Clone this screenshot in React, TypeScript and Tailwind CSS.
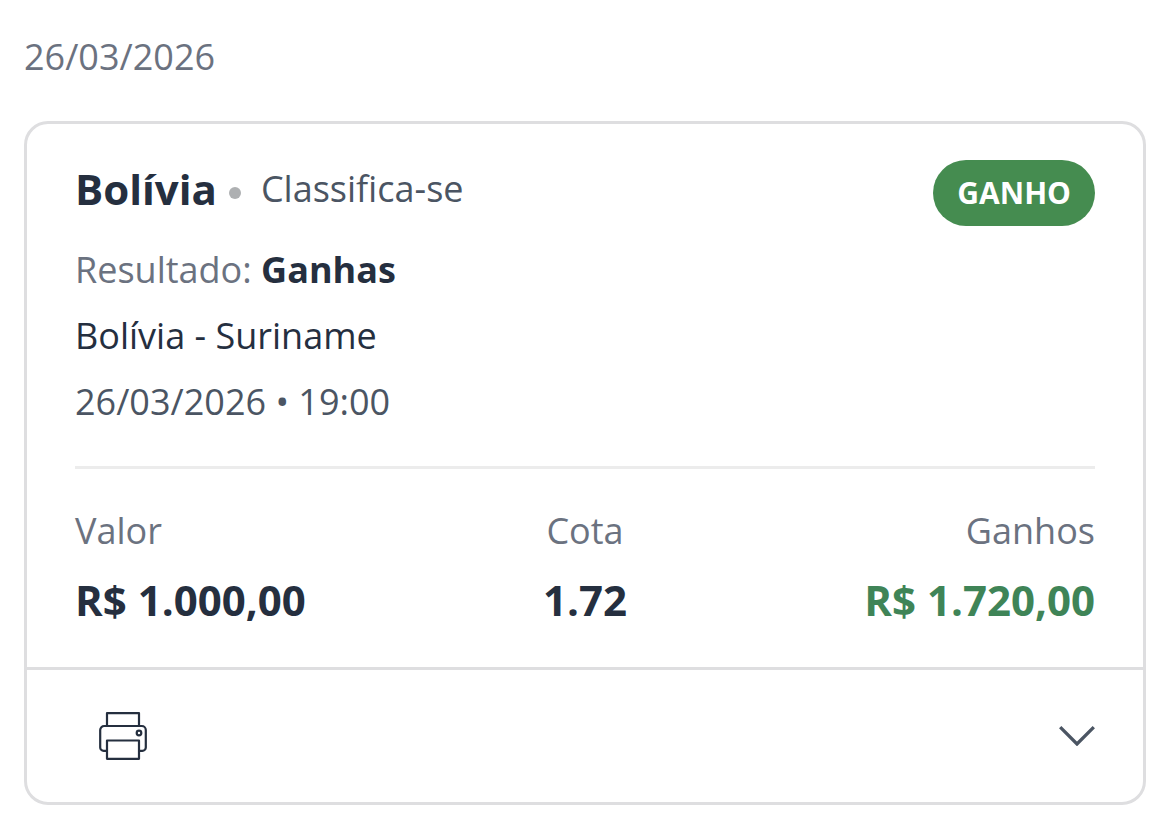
const STATS = [
  { label: "Valor", value: "R$ 1.000,00", align: "text-left", color: "text-[#252f3f]" },
  { label: "Cota", value: "1.72", align: "text-center", color: "text-[#252f3f]" },
  { label: "Ganhos", value: "R$ 1.720,00", align: "text-right", color: "text-[#3f8457]" },
];

function PrinterIcon() {
  return (
    <svg width="48" height="48" viewBox="0 0 48 48" fill="none" stroke="currentColor" strokeWidth="2.2" strokeLinejoin="round">
      <path d="M8 14V1.2h32V14" />
      <path d="M8 38.8H4.6a3.4 3.4 0 0 1-3.4-3.4V18a4 4 0 0 1 4-4h37.6a4 4 0 0 1 4 4v17.4a3.4 3.4 0 0 1-3.4 3.4H40" />
      <path d="M8 28.5h32v18.3H8z" />
      <circle cx="40" cy="21" r="2.3" />
    </svg>
  );
}

function ChevronIcon() {
  return (
    <svg width="36" height="20" viewBox="0 0 36 20" fill="none" stroke="currentColor" strokeWidth="3.3">
      <path d="M1.2 1.2L18 18L34.8 1.2" />
    </svg>
  );
}

export default function App() {
  return (
    <main className="min-h-screen bg-white px-6 py-8 font-['Open_Sans','Noto_Sans',sans-serif] text-4xl text-[#6b7280]">
      <h2 className="leading-[50px]">26/03/2026</h2>

      <article className="mt-[39px] rounded-3xl border-3 border-[#dedee0]">
        <div className="px-12 pt-9 pb-[37px]">
          <header className="flex items-start justify-between">
            <div className="flex items-center">
              <h3 className="text-[42px] leading-[58px] font-bold text-[#252f3f]">Bolívia</h3>
              <span className="mt-2 mr-5 ml-3 size-3 rounded-full bg-[#aeb0b2]" />
              <span className="leading-[58px] text-[#4b5563]">Classifica-se</span>
            </div>
            <span className="rounded-full bg-[#458c50] px-6 text-[30px] leading-[66px] font-bold text-white">GANHO</span>
          </header>

          <p className="mt-[17px] leading-[54px]">
            Resultado: <strong className="font-bold text-[#252f3f]">Ganhas</strong>
          </p>
          <p className="mt-3 leading-[54px] text-[#252f3f]">Bolívia - Suriname</p>
          <p className="mt-3 leading-[54px] text-[#4b5563]">26/03/2026 • 19:00</p>

          <dl className="mt-[37px] grid grid-cols-3 border-t-3 border-[#ececec] pt-[35px]">
            {STATS.map((stat) => (
              <div key={stat.label} className={stat.align}>
                <dt className="leading-[54px]">{stat.label}</dt>
                <dd className={`mt-3 text-[42px] leading-[60px] font-bold ${stat.color}`}>{stat.value}</dd>
              </div>
            ))}
          </dl>
        </div>

        <footer className="flex items-center justify-between border-t-3 border-[#dedee0] py-[42px] pr-12 pl-[72px]">
          <button type="button" aria-label="Imprimir" className="text-[#252f3f]">
            <PrinterIcon />
          </button>
          <button type="button" aria-label="Ver detalhes" className="text-[#4b5563]">
            <ChevronIcon />
          </button>
        </footer>
      </article>
    </main>
  );
}
